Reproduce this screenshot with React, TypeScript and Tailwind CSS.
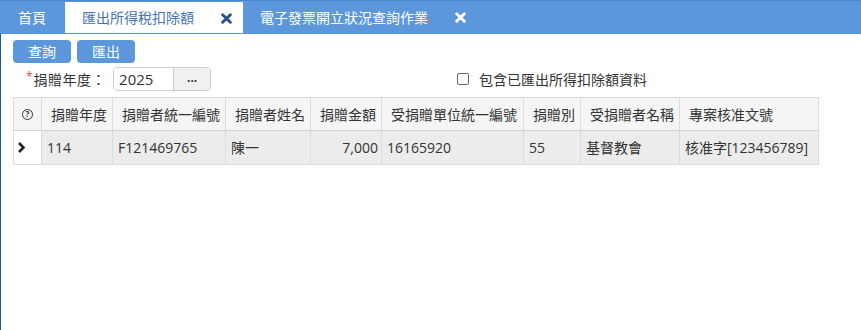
import React from "react";

const font = { fontFamily: '"Open Sans", "Noto Sans CJK TC", sans-serif' };

const cols = [
  { w: "w-[28px]", head: "" },
  { w: "w-[71px]", head: "捐贈年度" },
  { w: "w-[113px]", head: "捐贈者統一編號" },
  { w: "w-[85px]", head: "捐贈者姓名" },
  { w: "w-[71px]", head: "捐贈金額" },
  { w: "w-[142px]", head: "受捐贈單位統一編號" },
  { w: "w-[57px]", head: "捐贈別" },
  { w: "w-[99px]", head: "受捐贈者名稱" },
  { w: "w-[139px]", head: "專案核准文號" },
];

const row = ["114", "F121469765", "陳一", "7,000", "16165920", "55", "基督教會", "核准字[123456789]"];

const CloseX = ({ color }: { color: string }) => (
  <svg width="11" height="11" viewBox="0 0 10 10" className="shrink-0">
    <path d="M1.5 1.5 L8.5 8.5 M8.5 1.5 L1.5 8.5" stroke={color} strokeWidth="2.6" strokeLinecap="round" />
  </svg>
);

const App = () => {
  return (
    <div className="w-[861px] h-[330px] bg-white text-[14px] text-[#333] overflow-hidden" style={font}>
      <div className="flex h-[34px] bg-[#5b97da] border-t border-t-[#4a88d0] border-b border-b-[#5590d4]">
        <div className="w-[65px] flex items-center pl-[18px] text-white">首頁</div>
        <div className="w-[178px] mt-[1px] bg-white flex items-center pl-[17px] text-[#4573b3]">
          <span>匯出所得稅扣除額</span>
          <span className="ml-[27px] mt-[1px]">
            <CloseX color="#2d4f7f" />
          </span>
        </div>
        <div className="flex items-center pl-[17px] text-white">
          <span>電子發票開立狀況查詢作業</span>
          <span className="ml-[27px] mt-[1px]">
            <CloseX color="#ffffff" />
          </span>
        </div>
      </div>

      <div className="h-[296px] border-l-[1.5px] border-l-[#1e5593] pl-[12px]">
        <div className="flex gap-[6px] pt-[6px]">
          <button className="w-[58px] h-[23px] rounded-[4px] bg-[#5b97da] text-white leading-none">查詢</button>
          <button className="w-[58px] h-[23px] rounded-[4px] bg-[#5b97da] text-white leading-none">匯出</button>
        </div>

        <div className="flex items-center mt-[4px] h-[24px]">
          <span className="ml-[13px] text-[#e04a3a] text-[12px] -mt-[4px]">*</span>
          <span className="ml-[1px] tracking-[0.5px]">捐贈年度：</span>
          <div className="ml-[7px] flex h-[24px] border border-[#cfcfcf] rounded-[4px] overflow-hidden">
            <div className="w-[59px] pl-[5px] flex items-center bg-white text-[15px]">2025</div>
            <div className="w-[37px] border-l border-l-[#cfcfcf] bg-[#f0f0f0] flex items-center justify-center text-[12px] font-bold pb-[3px]">
              ...
            </div>
          </div>
          <div className="ml-[246px] flex items-center">
            <span className="w-[12px] h-[12px] border border-[#666] rounded-[2px] bg-white" />
            <span className="ml-[10px]">包含已匯出所得扣除額資料</span>
          </div>
        </div>

        <div className="mt-[6px] w-[806px] border border-[#dcdcdc]">
          <div className="flex h-[33px] bg-[#f5f5f5] border-b border-b-[#d4d4d4]">
            {cols.map((c, i) => (
              <div
                key={i}
                className={`${c.w} shrink-0 flex items-center ${i === 0 ? "justify-center" : "pl-[9px]"} whitespace-nowrap overflow-hidden ${i < cols.length - 1 ? "border-r border-r-[#dcdcdc]" : ""}`}
              >
                {i === 0 ? (
                  <span className="w-[11px] h-[11px] rounded-full border border-[#333] flex items-center justify-center text-[8px] font-bold leading-none">
                    ?
                  </span>
                ) : (
                  c.head
                )}
              </div>
            ))}
          </div>
          <div className="flex h-[33px] bg-[#ececec]">
            <div className="w-[28px] shrink-0 bg-white border-r border-r-[#dcdcdc] flex items-center pl-[3px]">
              <svg width="9" height="13" viewBox="0 0 9 13">
                <path d="M2 2 L6.5 6.5 L2 11" stroke="#222" strokeWidth="2.6" fill="none" />
              </svg>
            </div>
            {row.map((v, i) => (
              <div
                key={i}
                className={`${cols[i + 1].w} shrink-0 flex items-center ${i === 3 ? "justify-end pr-[3px]" : "pl-[5px]"} ${i < row.length - 1 ? "border-r border-r-[#dcdcdc]" : ""}`}
              >
                {v}
              </div>
            ))}
          </div>
        </div>
      </div>
    </div>
  );
};

export default App;
